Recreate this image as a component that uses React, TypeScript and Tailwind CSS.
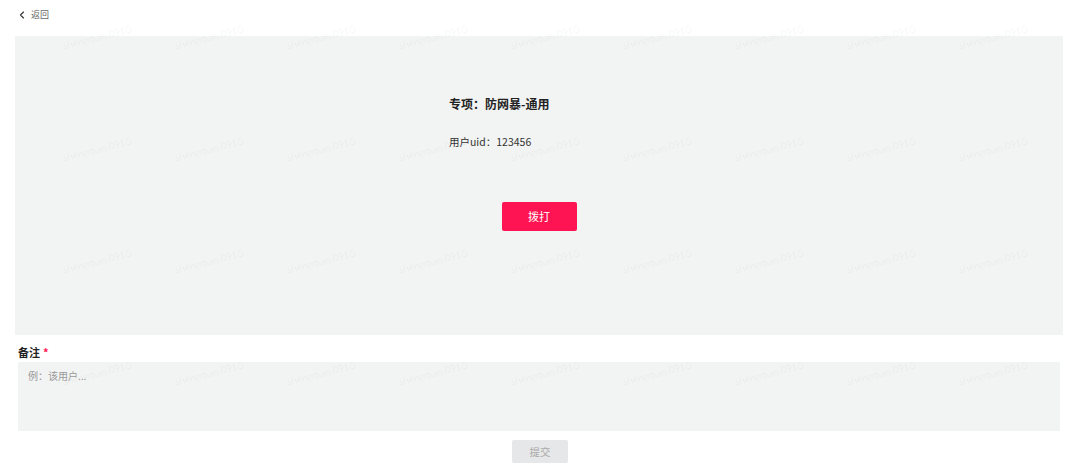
import { ChevronLeft } from "lucide-react";

const font = "font-['Noto_Sans_CJK_SC','Noto_Sans',sans-serif]";

function Watermark() {
  const rows = Array.from({ length: 4 });
  const cols = Array.from({ length: 9 });
  return (
    <div className="pointer-events-none absolute inset-0 overflow-hidden">
      {rows.map((_, r) =>
        cols.map((_, c) => (
          <span
            key={`${r}-${c}`}
            className="absolute -rotate-[14deg] text-[10px] text-black/[0.05] font-['Lato',sans-serif] whitespace-nowrap"
            style={{ left: 62 + c * 112, top: 30 + r * 112 }}
          >
            shengqian.0910
          </span>
        ))
      )}
    </div>
  );
}

export default function App() {
  return (
    <div className={`relative w-[1080px] h-[470px] bg-white overflow-hidden ${font}`}>
      <div className="flex items-center h-[28px] pl-[16px] pt-[1px] text-[9px] text-[#666]">
        <ChevronLeft className="w-[12px] h-[12px] text-[#333]" strokeWidth={2.2} />
        <span className="ml-[3px]">返回</span>
      </div>

      <div className="mt-[8px] ml-[15px] w-[1048px] h-[299px] bg-[#f2f3f3] flex flex-col items-center">
        <div className="w-[180px] pt-[60px]">
          <div className="text-[12px] font-bold text-[#222] leading-[16px]">专项：防网暴-通用</div>
          <div className="mt-[23px] text-[10.5px] text-[#333] leading-[14px]">用户uid：123456</div>
        </div>
        <button className="mt-[53px] w-[75px] h-[29px] rounded-[2px] bg-[#fe1452] text-white text-[11px]">
          拨打
        </button>
      </div>

      <div className="mt-[10px] ml-[18px] flex items-center text-[11px] font-bold text-[#222] leading-[14px]">
        备注<span className="ml-[3px] text-[#fe1452]">*</span>
      </div>
      <div className="mt-[3px] ml-[18px] w-[1042px] h-[69px] bg-[#f2f3f3] px-[10px] pt-[6px] text-[10px] text-[#999]">
        例：该用户...
      </div>
      <div className="flex justify-center mt-[9px]">
        <button className="w-[56px] h-[23px] rounded-[2px] bg-[#e6e7e8] text-[#aaa] text-[10.5px]">
          提交
        </button>
      </div>

      <Watermark />
    </div>
  );
}
